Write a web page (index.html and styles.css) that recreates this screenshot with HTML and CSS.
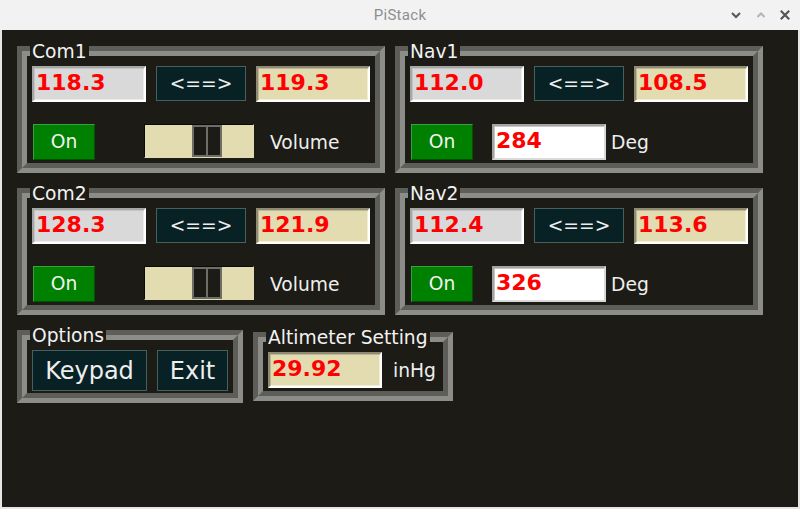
FILE: index.html
```html
<!DOCTYPE html>
<html>
<head>
<meta charset="utf-8">
<title>PiStack</title>
<link rel="stylesheet" href="styles.css">
</head>
<body>
<div class="window">
  <header class="titlebar">
    <div></div>
    <div class="title">PiStack</div>
    <div class="controls">
      <span class="ctl"><svg width="12" height="12" viewBox="0 0 12 12"><path d="M2 4 L6 8 L10 4" fill="none" stroke="#555" stroke-width="2"/></svg></span>
      <span class="ctl"><svg width="12" height="12" viewBox="0 0 12 12"><path d="M2.5 8 L6 4.5 L9.5 8" fill="none" stroke="#b4b4b4" stroke-width="2"/></svg></span>
      <span class="ctl"><svg width="12" height="12" viewBox="0 0 12 12"><path d="M1.8 1.8 L10.2 10.2 M10.2 1.8 L1.8 10.2" fill="none" stroke="#555" stroke-width="2.2"/></svg></span>
    </div>
  </header>
  <main class="content">
    <div class="row">
      <section class="lf lf-radio">
        <span class="lf-label">Com1</span>
        <div class="lf-body">
          <div class="line">
            <div class="entry entry-gray">118.3</div>
            <button class="btn swap">&lt;==&gt;</button>
            <div class="entry entry-beige">119.3</div>
          </div>
          <div class="line line-2">
            <button class="on">On</button>
            <div class="scale"><div class="thumb" style="margin-left:47px"></div></div>
            <span class="caption cap-volume">Volume</span>
          </div>
        </div>
      </section>
      <section class="lf lf-radio">
        <span class="lf-label">Nav1</span>
        <div class="lf-body">
          <div class="line">
            <div class="entry entry-gray">112.0</div>
            <button class="btn swap">&lt;==&gt;</button>
            <div class="entry entry-beige">108.5</div>
          </div>
          <div class="line line-2">
            <button class="on">On</button>
            <div class="entry entry-white entry-deg">284</div>
            <span class="caption cap-deg">Deg</span>
          </div>
        </div>
      </section>
    </div>
    <div class="row">
      <section class="lf lf-radio">
        <span class="lf-label">Com2</span>
        <div class="lf-body">
          <div class="line">
            <div class="entry entry-gray">128.3</div>
            <button class="btn swap">&lt;==&gt;</button>
            <div class="entry entry-beige">121.9</div>
          </div>
          <div class="line line-2">
            <button class="on">On</button>
            <div class="scale"><div class="thumb" style="margin-left:47px"></div></div>
            <span class="caption cap-volume">Volume</span>
          </div>
        </div>
      </section>
      <section class="lf lf-radio">
        <span class="lf-label">Nav2</span>
        <div class="lf-body">
          <div class="line">
            <div class="entry entry-gray">112.4</div>
            <button class="btn swap">&lt;==&gt;</button>
            <div class="entry entry-beige">113.6</div>
          </div>
          <div class="line line-2">
            <button class="on">On</button>
            <div class="entry entry-white entry-deg">326</div>
            <span class="caption cap-deg">Deg</span>
          </div>
        </div>
      </section>
    </div>
    <div class="row">
      <section class="lf lf-options">
        <span class="lf-label">Options</span>
        <div class="lf-body">
          <div class="line">
            <button class="btn big keypad">Keypad</button>
            <button class="btn big exit">Exit</button>
          </div>
        </div>
      </section>
      <section class="lf lf-alt">
        <span class="lf-label">Altimeter Setting</span>
        <div class="lf-body">
          <div class="line line-alt">
            <div class="entry entry-beige">29.92</div>
            <span class="caption cap-inhg">inHg</span>
          </div>
        </div>
      </section>
    </div>
  </main>
</div>
</body>
</html>
```
FILE: styles.css
```css
* { box-sizing: border-box; }

body {
  margin: 0;
  background: #ffffff;
  font-family: "DejaVu Sans", sans-serif;
}

.window {
  width: 800px;
  height: 509px;
  display: flex;
  flex-direction: column;
}

.titlebar {
  height: 30px;
  flex: none;
  background: #f2f2f2;
  display: grid;
  grid-template-columns: 1fr auto 1fr;
  align-items: center;
}

.title {
  font-family: Roboto, "DejaVu Sans", sans-serif;
  font-size: 15px;
  color: #8e8e8e;
  letter-spacing: 0.3px;
}

.controls {
  justify-self: end;
  display: flex;
  padding-right: 3px;
}

.ctl {
  width: 24px;
  height: 30px;
  display: flex;
  align-items: center;
  justify-content: center;
}

.ctl:first-child { margin-right: 1px; }

.content {
  flex: 1;
  background: #1c1b15;
  border: 2px solid #e6e6e6;
  border-top: 0;
  padding: 16px 0 0 15px;
  display: flex;
  flex-direction: column;
  gap: 15px;
}

.row {
  display: flex;
  gap: 10px;
  align-items: center;
}

/* label frames */
.lf {
  position: relative;
  border: 5px solid;
  border-color: #5d5d59 #8c8c88 #8c8c88 #5d5d59;
}

.lf-body {
  border: 5px solid;
  border-color: #8c8c88 #5d5d59 #5d5d59 #8c8c88;
}

.lf-label {
  position: absolute;
  top: -10px;
  left: 8px;
  background: #1c1b15;
  color: #f2f2f2;
  font-size: 18.7px;
  line-height: 21px;
  padding: 0 2px;
  white-space: nowrap;
}

.lf-radio { width: 368px; }
.lf-radio .lf-body { padding: 10px 5px 3px; }

.lf-options { width: 226px; }
.lf-options .lf-body { padding: 10px 5px 2px; }

.lf-alt { width: 200px; }
.lf-alt .lf-body { padding: 10px 5px 3px; }

.line {
  display: flex;
  gap: 10px;
  align-items: flex-start;
}

.line-2 {
  margin-top: 22px;
  gap: 0;
  align-items: center;
}

.line-alt {
  gap: 0;
  align-items: center;
}

/* entries */
.entry {
  width: 114px;
  height: 36px;
  border: 2px solid;
  padding: 0 0 2px 2px;
  font-size: 22px;
  font-weight: bold;
  line-height: 30px;
  color: #ff0000;
}

.entry-gray {
  background: #d9d9d9;
  border-color: #a6a6a6 #ffffff #ffffff #a6a6a6;
  box-shadow: inset 1px 1px 0 #c4c4c4, inset -1px -1px 0 #ececec;
}

.entry-beige {
  background: #e3dcb1;
  border-color: #8f8a74 #ffffff #ffffff #8f8a74;
  box-shadow: inset 1px 1px 0 #bdb795, inset -1px -1px 0 #f2eed4;
}

.entry-white {
  background: #ffffff;
  border-color: #a3a3a3 #d9d9d9 #d9d9d9 #a3a3a3;
  box-shadow: inset 1px 1px 0 #c8c8c8;
}

.entry-deg { margin-left: 19px; }

/* buttons */
.btn {
  font-family: "DejaVu Sans", sans-serif;
  background: #082125;
  border: 1px solid #45605f;
  color: #eeeeee;
  padding: 0;
  margin: 0;
}

.swap {
  width: 90px;
  height: 35px;
  font-size: 18.7px;
}

.big {
  height: 41px;
  font-size: 24px;
}

.keypad { width: 115px; }
.exit { width: 71px; }

.on {
  font-family: "DejaVu Sans", sans-serif;
  width: 62px;
  height: 36px;
  margin: 0 0 0 1px;
  padding: 0 0 2px;
  background: #008000;
  border: 1px solid;
  border-color: #3f9f3f #005400 #005400 #3f9f3f;
  color: #f4f4f4;
  font-size: 18.7px;
}

/* volume scale */
.scale {
  width: 110px;
  height: 34px;
  margin-left: 49px;
  align-self: flex-start;
  background: #e3dcb1;
  border: 1px solid;
  border-color: #0a0a08 #e3dcb1 #e3dcb1 #0a0a08;
  display: flex;
}

.thumb {
  width: 30px;
  height: 100%;
  background: #1c1b15;
  border: 2px solid #6d6d69;
  position: relative;
}

.thumb::after {
  content: "";
  position: absolute;
  left: 12px;
  top: 0;
  bottom: 0;
  width: 2px;
  background: #6d6d69;
}

/* captions */
.caption {
  color: #eeeeee;
  font-size: 18.7px;
  line-height: 21px;
}

.cap-volume { margin-left: 16px; }
.cap-deg { margin-left: 5px; }
.cap-inhg { margin-left: 11px; }
```
